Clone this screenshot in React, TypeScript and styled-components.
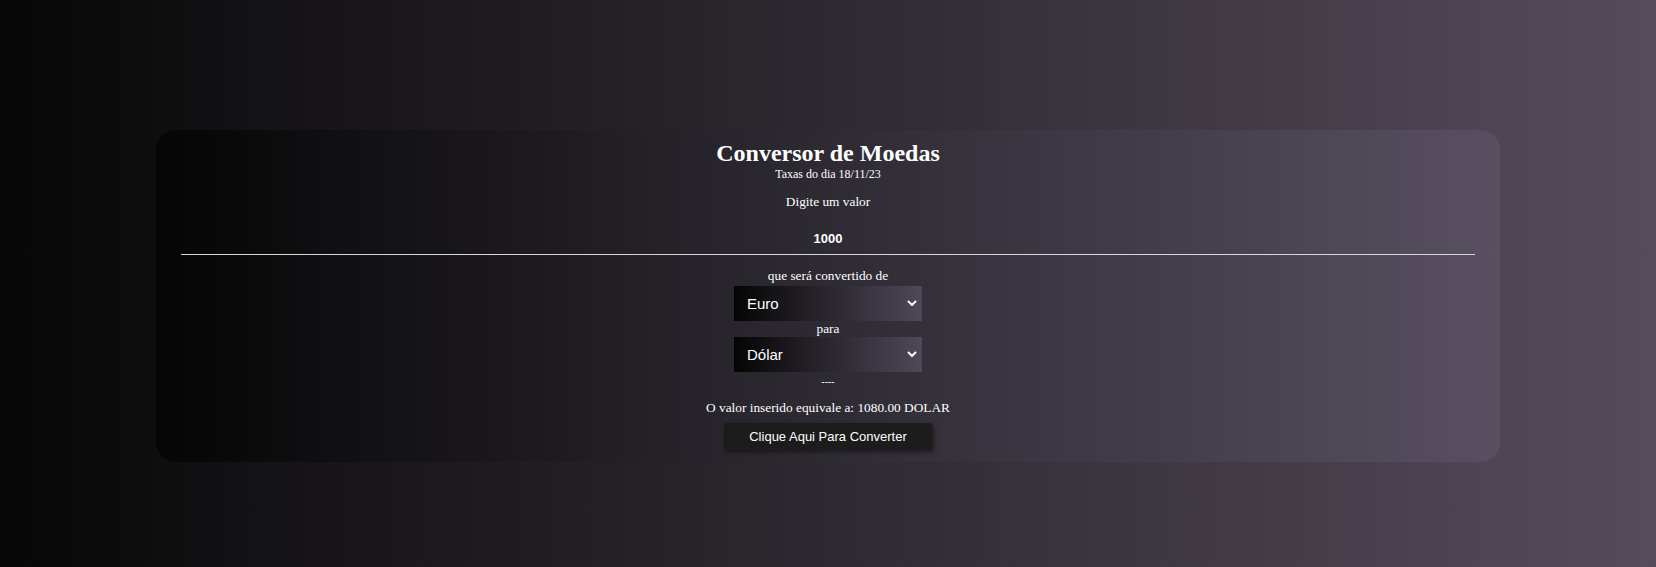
import React, { useState } from "react";
import styled, { createGlobalStyle } from "styled-components";

const GlobalStyle = createGlobalStyle`
  html, body {
    margin: 0;
    padding: 0;
  }
  body {
    font-family: "Liberation Serif", "Times New Roman", serif;
    background: #070707;
  }
`;

const rates: Record<string, Record<string, number>> = {
  euro: { dolar: 1.08, real: 5.32, euro: 1 },
  dolar: { euro: 0.92, real: 4.91, dolar: 1 },
  real: { euro: 0.19, dolar: 0.2, real: 1 },
};

const names: Record<string, string> = {
  euro: "Euro",
  dolar: "Dólar",
  real: "Real",
};

const Conversor = () => {
  const [valor, setValor] = useState("1000");
  const [de, setDe] = useState("euro");
  const [para, setPara] = useState("dolar");
  const [resultado, setResultado] = useState("1080.00 DOLAR");

  const converter = () => {
    const n = parseFloat(valor) || 0;
    setResultado((n * rates[de][para]).toFixed(2) + " " + para.toUpperCase());
  };

  return (
    <Page>
      <GlobalStyle />
      <Card>
        <Title>Conversor de Moedas</Title>
        <Rates>Taxas do dia 18/11/23</Rates>
        <Label>Digite um valor</Label>
        <ValueInput value={valor} onChange={(e) => setValor(e.target.value)} />
        <Label>que será convertido de</Label>
        <SelectWrap $gap={2}>
          <Select value={de} onChange={(e) => setDe(e.target.value)}>
            {Object.keys(names).map((k) => (
              <option key={k} value={k}>
                {names[k]}
              </option>
            ))}
          </Select>
          <Chevron />
        </SelectWrap>
        <Small>para</Small>
        <SelectWrap $gap={1}>
          <Select value={para} onChange={(e) => setPara(e.target.value)}>
            {Object.keys(names).map((k) => (
              <option key={k} value={k}>
                {names[k]}
              </option>
            ))}
          </Select>
          <Chevron />
        </SelectWrap>
        <Dashes>----</Dashes>
        <Result>O valor inserido equivale a: {resultado}</Result>
        <Button onClick={converter}>Clique Aqui Para Converter</Button>
      </Card>
    </Page>
  );
};

const Chevron = () => (
  <ChevronBox width="10" height="7" viewBox="0 0 10 7">
    <polyline
      points="1.5,1.5 5,5 8.5,1.5"
      fill="none"
      stroke="#fff"
      strokeWidth="2"
      strokeLinecap="round"
      strokeLinejoin="round"
    />
  </ChevronBox>
);

const Page = styled.div`
  min-height: 100vh;
  box-sizing: border-box;
  padding-top: 130px;
  display: flex;
  justify-content: center;
  align-items: flex-start;
  background: linear-gradient(to right, #070707, #554c5a);
`;

const Card = styled.div`
  width: 1344px;
  box-sizing: border-box;
  padding: 9px 25px 12px;
  border-radius: 20px;
  display: flex;
  flex-direction: column;
  align-items: center;
  text-align: center;
  color: #fff;
  background: linear-gradient(to right, #050505, #585061);
`;

const Title = styled.h2`
  margin: 0;
  font-size: 24px;
  line-height: 28px;
  font-weight: bold;
`;

const Rates = styled.p`
  margin: 0;
  font-size: 12px;
  line-height: 14px;
`;

const Label = styled.p`
  margin: 13px 0 0;
  font-size: 13.33px;
  line-height: 15.33px;
`;

const Small = styled.p`
  margin: 0;
  font-size: 13.33px;
  line-height: 15.33px;
`;

const ValueInput = styled.input`
  margin-top: 14px;
  width: 100%;
  height: 32px;
  box-sizing: border-box;
  border: none;
  border-bottom: 1px solid #d8d8d8;
  background: transparent;
  color: #fff;
  text-align: center;
  font-family: "Liberation Sans", Arial, sans-serif;
  font-size: 13px;
  font-weight: bold;
  outline: none;
`;

const SelectWrap = styled.div<{ $gap: number }>`
  position: relative;
  margin-top: ${(p) => p.$gap}px;
  width: 188px;
  height: 35px;
`;

const Select = styled.select`
  appearance: none;
  width: 100%;
  height: 100%;
  box-sizing: border-box;
  padding: 0 13px;
  border: none;
  outline: none;
  color: #fff;
  font-family: "Liberation Sans", Arial, sans-serif;
  font-size: 15px;
  background: linear-gradient(to right, #050505, #4f4857);
  option {
    color: #000;
  }
`;

const ChevronBox = styled.svg`
  position: absolute;
  right: 5px;
  top: 14px;
  pointer-events: none;
`;

const Dashes = styled.p`
  margin: 2px 0 0;
  font-size: 10px;
  line-height: 15px;
`;

const Result = styled.p`
  margin: 11px 0 0;
  font-size: 13.33px;
  line-height: 15.33px;
`;

const Button = styled.button`
  margin-top: 8px;
  height: 27px;
  padding: 0 25px;
  border: none;
  border-radius: 3px;
  background: #1c1c1c;
  color: #fff;
  font-family: "Liberation Sans", Arial, sans-serif;
  font-size: 13px;
  box-shadow: 2px 2px 4px rgba(0, 0, 0, 0.45);
  cursor: pointer;
`;

export default Conversor;
